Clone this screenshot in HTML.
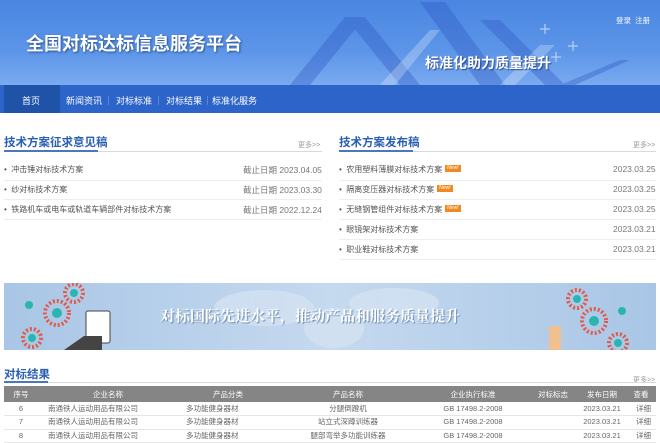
<!DOCTYPE html>
<html><head><meta charset="utf-8"><style>
*{margin:0;padding:0;box-sizing:border-box}
body{width:660px;height:439px;overflow:hidden;background:#fff;font-family:"Liberation Sans","Noto Sans CJK SC",sans-serif;position:relative;color:#555}
.a{position:absolute;white-space:nowrap}
#hd{position:absolute;left:0;top:0;width:660px;height:85px;background:linear-gradient(180deg,#4a86e2 0%,#5c95e8 60%,#7aaaf0 100%);overflow:hidden}
#nav{position:absolute;left:0;top:85px;width:660px;height:28px;background:#2c64c9}
.nv{color:#fff;font-size:9px;top:94px}
.sec{font-size:11.5px;font-weight:bold;color:#2b5fb3}
.more{font-size:7px;color:#999}
.li{font-size:8px;color:#555}
.dt{font-size:8.5px;color:#777}
.new{display:inline-block;background:#f08a20;color:#fff;font-size:5px;padding:0 2px;margin-left:3px;vertical-align:3px;height:7px;line-height:7px}
.sep{position:absolute;height:1px;background:#eee}
table{position:absolute;left:4px;top:386px;width:652px;border-collapse:collapse;font-size:7.5px}
th{background:#858585;color:#fff;height:16px;font-weight:normal;font-size:7.5px}
td{height:13.5px;line-height:12px;color:#666;border-bottom:1px solid #e6e6e6}
</style></head><body>
<div id="hd">
<svg width="660" height="85" style="position:absolute;left:0;top:0">
<g opacity="0.35" fill="#2a55c0">
<polygon points="290,85 345,17 365,17 310,85"/>
<polygon points="345,17 400,85 420,85 365,17"/>
<polygon points="420,2 480,85 505,85 445,2"/>
<polygon points="480,20 545,85 565,85 500,20"/>
<polygon points="560,85 620,60 630,60 575,85"/>
</g>
<g opacity="0.25" fill="#fff"><polygon points="380,85 430,30 440,30 395,85"/><polygon points="500,85 540,45 555,45 515,85"/></g>
<g stroke="#b8d0f5" stroke-width="1.2"><path d="M545 24v10M540 29h10M556 52v10M551 57h10M573 41v10M568 46h10"/></g>
</svg>
<div class="a" style="left:26px;top:30px;font-size:18px;font-weight:bold;color:#fff;text-shadow:1px 1px 2px #2a4c90">全国对标达标信息服务平台</div>
<div class="a" style="left:425px;top:53px;font-size:14px;font-weight:bold;color:#fff;text-shadow:1px 1px 1px #2a4c90">标准化助力质量提升</div>
<div class="a" style="left:616px;top:15px;font-size:7.5px;color:#fff">登录&nbsp;&nbsp;注册</div>
</div>
<div id="nav"><div class="a" style="left:4px;top:0;width:56px;height:28px;background:#1e53a8"></div></div>
<div class="a nv" style="left:22px;">首页</div>
<div class="a nv" style="left:66px;">新闻资讯</div>
<div class="a nv" style="left:116px;">对标标准</div>
<div class="a nv" style="left:166px;">对标结果</div>
<div class="a nv" style="left:212px;">标准化服务</div>
<div class="a" style="left:108px;top:96px;width:1px;height:9px;background:#5a86d8"></div>
<div class="a" style="left:158px;top:96px;width:1px;height:9px;background:#5a86d8"></div>
<div class="a" style="left:207px;top:96px;width:1px;height:9px;background:#5a86d8"></div>

<div class="a sec" style="left:4px;top:134px">技术方案征求意见稿</div>
<div class="a more" style="left:298px;top:140px">更多&gt;&gt;</div>
<div class="a" style="left:4px;top:151px;width:318px;height:1px;background:#d5dbe5"></div>
<div class="a" style="left:4px;top:150px;width:94px;height:2px;background:#4a77c0"></div>
<div class="a li" style="left:4px;top:164px">•&nbsp; 冲击锤对标技术方案</div><div class="a dt" style="left:243px;top:164px">截止日期 2023.04.05</div>
<div class="sep" style="left:4px;top:180px;width:318px"></div>
<div class="a li" style="left:4px;top:184px">•&nbsp; 纱对标技术方案</div><div class="a dt" style="left:243px;top:184px">截止日期 2023.03.30</div>
<div class="sep" style="left:4px;top:199px;width:318px"></div>
<div class="a li" style="left:4px;top:204px">•&nbsp; 铁路机车或电车或轨道车辆部件对标技术方案</div><div class="a dt" style="left:243px;top:204px">截止日期 2022.12.24</div>
<div class="sep" style="left:4px;top:219px;width:318px"></div>

<div class="a sec" style="left:339px;top:134px">技术方案发布稿</div>
<div class="a more" style="left:633px;top:140px">更多&gt;&gt;</div>
<div class="a" style="left:339px;top:151px;width:317px;height:1px;background:#d5dbe5"></div>
<div class="a" style="left:339px;top:150px;width:74px;height:2px;background:#4a77c0"></div>
<div class="a li" style="left:339px;top:164px">•&nbsp; 农用塑料薄膜对标技术方案<span class="new">New!</span></div><div class="a dt" style="left:613px;top:164px">2023.03.25</div>
<div class="sep" style="left:339px;top:180px;width:317px"></div>
<div class="a li" style="left:339px;top:184px">•&nbsp; 隔离变压器对标技术方案<span class="new">New!</span></div><div class="a dt" style="left:613px;top:184px">2023.03.25</div>
<div class="sep" style="left:339px;top:199px;width:317px"></div>
<div class="a li" style="left:339px;top:204px">•&nbsp; 无缝钢管组件对标技术方案<span class="new">New!</span></div><div class="a dt" style="left:613px;top:204px">2023.03.25</div>
<div class="sep" style="left:339px;top:219px;width:317px"></div>
<div class="a li" style="left:339px;top:224px">•&nbsp; 眼镜架对标技术方案</div><div class="a dt" style="left:613px;top:224px">2023.03.21</div>
<div class="sep" style="left:339px;top:239px;width:317px"></div>
<div class="a li" style="left:339px;top:244px">•&nbsp; 职业鞋对标技术方案</div><div class="a dt" style="left:613px;top:244px">2023.03.21</div>
<div class="sep" style="left:339px;top:259px;width:317px"></div>

<div class="a" style="left:4px;top:283px;width:652px;height:67px;background:linear-gradient(90deg,#a9c6e6,#c5d9ef 50%,#a9c6e6);overflow:hidden">
<svg width="652" height="67" style="position:absolute;left:0;top:0">
<g fill="#d6e4f3" opacity="0.7"><ellipse cx="260" cy="25" rx="50" ry="18"/><ellipse cx="330" cy="45" rx="30" ry="20"/><ellipse cx="390" cy="20" rx="45" ry="15"/></g>
<g fill="none" stroke="#e05a4a" stroke-width="4" stroke-dasharray="2 2"><circle cx="53" cy="30" r="12"/><circle cx="70" cy="10" r="9"/><circle cx="28" cy="55" r="9"/><circle cx="590" cy="38" r="12"/><circle cx="573" cy="16" r="9"/><circle cx="614" cy="60" r="9"/></g>
<g fill="#2bb5b0"><circle cx="53" cy="30" r="5"/><circle cx="70" cy="10" r="4"/><circle cx="28" cy="55" r="4"/><circle cx="25" cy="22" r="4"/><circle cx="590" cy="38" r="5"/><circle cx="573" cy="16" r="4"/><circle cx="614" cy="60" r="4"/><circle cx="618" cy="28" r="4"/></g>
<rect x="82" y="28" width="24" height="32" rx="2" fill="#fff" stroke="#444"/>
<path d="M60 67l20-14h18v14z" fill="#444"/>
<path d="M545 67v-24h12v24z" fill="#f0c090"/>
</svg>
<div class="a" style="left:156px;top:22px;font-size:15px;font-weight:bold;color:#fff;font-family:'Liberation Serif','Noto Serif CJK SC',serif;text-shadow:1px 1px 1px #6a88b0">对标国际先进水平，推动产品和服务质量提升</div>
</div>

<div class="a sec" style="left:4px;top:366px">对标结果</div>
<div class="a more" style="left:633px;top:375px">更多&gt;&gt;</div>
<div class="a" style="left:4px;top:382px;width:652px;height:1px;background:#d5dbe5"></div>
<div class="a" style="left:4px;top:381px;width:44px;height:2px;background:#4a77c0"></div>
<table>
<tr><th style="width:34px">序号</th><th style="width:140px">企业名称</th><th style="width:100px">产品分类</th><th style="width:140px">产品名称</th><th style="width:110px">企业执行标准</th><th style="width:50px">对标标志</th><th style="width:48px">发布日期</th><th>查看</th></tr>
<tr><td style="text-align:center">6</td><td style="padding-left:10px">南通铁人运动用品有限公司</td><td style="padding-left:8px">多功能健身器材</td><td style="text-align:center">分腿倒蹬机</td><td style="text-align:center">GB 17498.2-2008</td><td></td><td style="text-align:center">2023.03.21</td><td style="padding-left:10px">详细</td></tr>
<tr><td style="text-align:center">7</td><td style="padding-left:10px">南通铁人运动用品有限公司</td><td style="padding-left:8px">多功能健身器材</td><td style="text-align:center">站立式深蹲训练器</td><td style="text-align:center">GB 17498.2-2008</td><td></td><td style="text-align:center">2023.03.21</td><td style="padding-left:10px">详细</td></tr>
<tr><td style="text-align:center">8</td><td style="padding-left:10px">南通铁人运动用品有限公司</td><td style="padding-left:8px">多功能健身器材</td><td style="text-align:center">腿部弯举多功能训练器</td><td style="text-align:center">GB 17498.2-2008</td><td></td><td style="text-align:center">2023.03.21</td><td style="padding-left:10px">详细</td></tr>
</table>
</body></html>
